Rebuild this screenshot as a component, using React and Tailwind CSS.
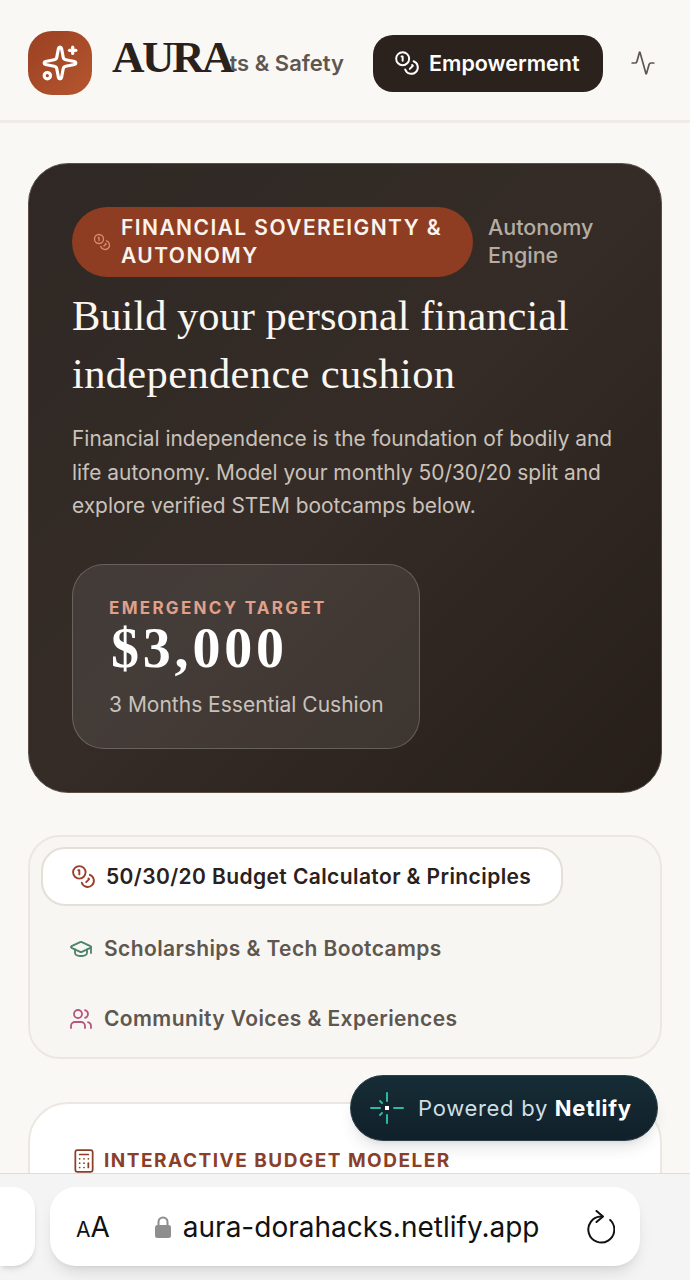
import React from 'react';
import { Sparkles, Coins, Activity, GraduationCap, Users, Calculator } from 'lucide-react';

const serif = "font-['Liberation_Serif',serif]";

const NetlifyMark = () => (
  <svg width="36" height="36" viewBox="0 0 36 36" fill="none" className="shrink-0">
    <rect x="16" y="16" width="4" height="4" fill="#ffffff" />
    <g stroke="#2fb8a8" strokeWidth="2" strokeLinecap="round">
      <path d="M2 18h9" />
      <path d="M25 18h9" />
      <path d="M18 3v8" />
      <path d="M18 25v8" />
      <path d="M13 13l-2-2" />
      <path d="M13 23l-2 2" />
    </g>
  </svg>
);

const LockIcon = () => (
  <svg width="16" height="22" viewBox="0 0 16 22" fill="none" className="ml-[45px] shrink-0">
    <path d="M3.5 10V6a4.5 4.5 0 0 1 9 0v4" stroke="#8e8e8e" strokeWidth="2" />
    <rect x="0" y="9" width="16" height="13" rx="2.5" fill="#8e8e8e" />
  </svg>
);

const ReloadIcon = () => (
  <svg width="28" height="34" viewBox="0 0 28 34" fill="none" stroke="#111" strokeWidth="2" strokeLinecap="round" strokeLinejoin="round">
    <path d="M14 6.5A13 13 0 1 0 23.2 10" />
    <path d="M9.5 1 16 6.5 9.5 12" />
  </svg>
);

export default function App() {
  return (
    <div className="relative h-[1280px] w-[690px] overflow-hidden bg-[#faf8f5] font-['Inter',sans-serif]">
      {/* Header */}
      <header className="flex h-[123px] items-center border-b-[3px] border-[#efece7] pl-[28px] pr-[34px] pt-[6px]">
        <div className="flex h-[64px] w-[64px] shrink-0 items-center justify-center rounded-[24px] bg-gradient-to-br from-[#9a4022] to-[#b5562f]">
          <Sparkles size={38} color="#ffffff" strokeWidth={2} />
        </div>
        <span className={`${serif} ml-[20px] mb-[12px] w-[118px] shrink-0 text-[45px] font-bold leading-none tracking-[-2.5px] text-[#2a211c]`}>AURA</span>
        <div className="flex w-[114px] shrink-0 justify-end overflow-hidden whitespace-nowrap text-[22px] font-semibold text-[#5e5750]">
          Rights &amp; Safety
        </div>
        <div className="ml-[29px] flex h-[57px] w-[230px] shrink-0 items-center gap-[9px] rounded-[20px] bg-[#2c221d] pl-[21px] text-[21.5px] font-semibold text-white">
          <Coins size={26} strokeWidth={1.8} />
          Empowerment
        </div>
        <Activity size={26} strokeWidth={1.6} color="#5e5750" className="ml-[27px] shrink-0" />
      </header>

      <main className="px-[28px] pt-[40px]">
        {/* Hero */}
        <section className="h-[630px] rounded-[40px] border border-[#5a5048] bg-gradient-to-br from-[#2f2824] via-[#352c27] to-[#261e19] px-[43px] pt-[43px]">
          <div className="flex items-start">
            <div className="flex h-[70px] w-[401px] shrink-0 items-center gap-[10px] rounded-full bg-[#8f3d22] pl-[21px]">
              <Coins size={18} strokeWidth={1.8} color="#d98a6f" className="shrink-0" />
              <span className="text-[21px] font-semibold uppercase leading-[28px] tracking-[1.43px] text-[#faf3ee]">
                Financial Sovereignty &amp;<br />Autonomy
              </span>
            </div>
            <span className="ml-[15px] pt-[6px] text-[21.5px] font-medium leading-[28px] text-[#b5aca4]">Autonomy<br />Engine</span>
          </div>
          <h1 className={`${serif} mt-[10px] text-[42.5px] font-normal leading-[58px] text-[#faf6f1]`}>
            Build your personal financial<br /><span className="tracking-[0.35px]">independence cushion</span>
          </h1>
          <p className="mt-[19px] text-[20.9px] leading-[33.5px] text-[#c9c2bb]">
            Financial independence is the foundation of bodily and<br />
            life autonomy. Model your monthly 50/30/20 split and<br />
            explore verified STEM bootcamps below.
          </p>
          <div className="mt-[41px] h-[185px] w-[348px] rounded-[32px] border border-white/20 bg-white/[0.08] pl-[36px] pt-[32px]">
            <div className="text-[17px] font-bold uppercase leading-[22px] tracking-[2.3px] text-[#e0a08a]">Emergency Target</div>
            <div className={`${serif} ml-[2px] mt-[-1px] text-[56px] font-bold leading-[60px] tracking-[3.8px] text-white`}>$3,000</div>
            <div className="mt-[13px] text-[21px] leading-[28px] text-[#c9c2bb]">3 Months Essential Cushion</div>
          </div>
        </section>

        {/* Tabs */}
        <nav className="mt-[42px] h-[224px] rounded-[32px] border-2 border-[#ece8e1] bg-[#f8f6f2] pl-[11px] pt-[10px] tracking-[0.4px]">
          <div className="flex h-[59px] w-[522px] items-center gap-[10px] rounded-[24px] border-2 border-[#e4dfd7] bg-white pl-[28px] text-[21px] font-semibold text-[#2a211c]">
            <Coins size={25} strokeWidth={1.8} color="#9a3f2a" />
            50/30/20 Budget Calculator &amp; Principles
          </div>
          <div className="mt-[27px] flex h-[32px] items-center gap-[11px] pl-[28px] text-[21px] font-semibold text-[#5e5750]">
            <GraduationCap size={24} strokeWidth={1.8} color="#4a8468" />
            Scholarships &amp; Tech Bootcamps
          </div>
          <div className="mt-[38px] flex h-[32px] items-center gap-[11px] pl-[28px] text-[21px] font-semibold text-[#5e5750]">
            <Users size={24} strokeWidth={1.8} color="#b4577f" />
            Community Voices &amp; Experiences
          </div>
        </nav>

        {/* Budget card */}
        <section className="mt-[43px] h-[300px] rounded-[40px] border-2 border-[#ece8e1] bg-white pl-[41px] pt-[44px]">
          <div className="flex items-center gap-[7px] text-[19px] font-bold uppercase leading-[24px] tracking-[1.5px] text-[#8a3f2a]">
            <Calculator size={26} strokeWidth={1.6} />
            Interactive Budget Modeler
          </div>
        </section>
      </main>

      {/* Netlify badge */}
      <div className="absolute left-[350px] top-[1075px] flex h-[66px] w-[308px] items-center gap-[13px] rounded-full border border-[#2a3f48] bg-gradient-to-b from-[#162d36] to-[#11202a] pl-[18px] text-[22px] tracking-[0.7px] text-[#cfdfe3] shadow-lg">
        <NetlifyMark />
        <span>Powered by <b className="font-bold text-white">Netlify</b></span>
      </div>

      {/* Browser bar */}
      <div className="absolute inset-x-0 bottom-0 flex h-[107px] gap-[15px] border-t border-[#dddddd] bg-[#f4f4f4] pt-[13px]">
        <div className="h-[79px] w-[35px] shrink-0 rounded-r-[22px] bg-white shadow-md" />
        <div className="flex h-[79px] w-[590px] shrink-0 items-center rounded-[26px] bg-white pl-[26px] shadow-lg">
          <span className="text-[#111]"><span className="text-[21px]">A</span><span className="text-[28px]">A</span></span>
          <LockIcon />
          <span className="ml-[12px] text-[28px] text-[#111]">aura-dorahacks.netlify.app</span>
          <span className="ml-[48px]"><ReloadIcon /></span>
        </div>
      </div>
    </div>
  );
}
